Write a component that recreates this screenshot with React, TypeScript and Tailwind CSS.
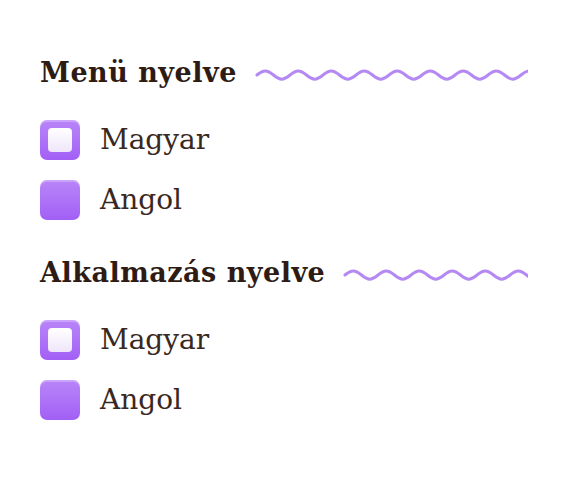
import { useState } from 'react';

const SECTIONS = [
  { id: 'menu', title: 'Menü nyelve' },
  { id: 'app', title: 'Alkalmazás nyelve' },
];

const LANGS = ['Magyar', 'Angol'];

function Wave() {
  const period = 33;
  const count = 12;
  let d = 'M 2 8';
  for (let i = 0; i < count; i++) {
    const x = 2 + i * period;
    d += ` C ${x + period * 0.2} 2.5, ${x + period * 0.3} 2.5, ${x + period * 0.5} 8 S ${x + period * 0.8} 13.5, ${x + period} 8`;
  }
  return (
    <div className="flex-1 h-4 overflow-hidden mt-1">
      <svg className="h-4 w-[420px]" viewBox="0 0 420 16">
        <path d={d} fill="none" stroke="#b589f3" strokeWidth="3" strokeLinecap="round" />
      </svg>
    </div>
  );
}

function Box({ checked, onClick }: { checked: boolean; onClick: () => void }) {
  return (
    <button
      onClick={onClick}
      className="w-10 h-10 shrink-0 rounded-[7px] bg-gradient-to-b from-[#b985f8] to-[#a25ff5] flex items-center justify-center shadow-[inset_0_2px_0_rgba(255,255,255,0.25)]"
    >
      {checked && (
        <span className="w-6 h-6 rounded-[4px] bg-gradient-to-b from-white to-[#efe6fb]" />
      )}
    </button>
  );
}

export default function App() {
  const [selected, setSelected] = useState<Record<string, string>>({ menu: 'Magyar', app: 'Magyar' });

  return (
    <div className="w-[568px] h-[492px] bg-white pl-10 pr-10 pt-[56px] font-['DejaVu_Serif',serif] text-[#3a2820]">
      {SECTIONS.map((s) => (
        <section key={s.id} className="mb-[36px]">
          <div className="flex items-center gap-[18px] mb-[30px]">
            <h2 className="text-[27px] font-bold leading-[34px] tracking-[0.5px] text-[#2e1b13]">{s.title}</h2>
            <Wave />
          </div>
          <div className="flex flex-col gap-5">
            {LANGS.map((l) => (
              <div key={l} className="flex items-center gap-5">
                <Box checked={selected[s.id] === l} onClick={() => setSelected({ ...selected, [s.id]: l })} />
                <span className="text-[28px] leading-10">{l}</span>
              </div>
            ))}
          </div>
        </section>
      ))}
    </div>
  );
}
